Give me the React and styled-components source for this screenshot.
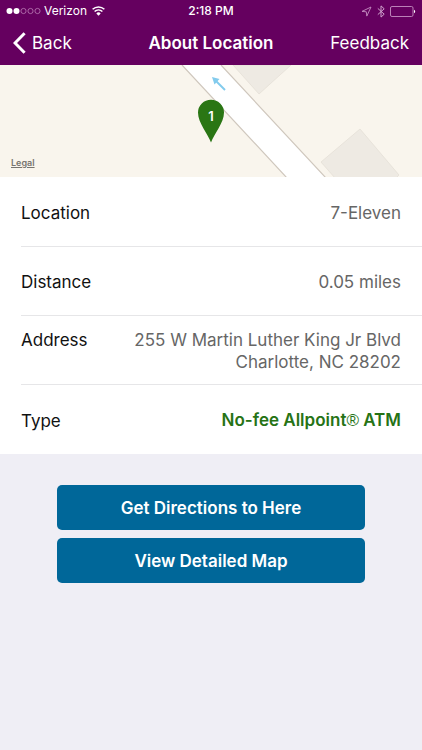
import React from "react";
import styled, { createGlobalStyle } from "styled-components";

const GlobalStyle = createGlobalStyle`
  * { box-sizing: border-box; }
  body {
    margin: 0;
    background: #efeef5;
    color: #111;
    font-family: Inter, "Liberation Sans", sans-serif;
    font-size: 17px;
    line-height: 22px;
  }
`;

const Screen = styled.div`
  min-height: 100vh;
  display: flex;
  flex-direction: column;
`;

const Header = styled.header`
  background: #65005f;
  color: #fff;
`;

const StatusBar = styled.div`
  display: grid;
  grid-template-columns: 1fr auto 1fr;
  align-items: center;
  height: 22px;
  padding: 0 6px;
  font-size: 12px;
  line-height: 16px;
`;

const StatusGroup = styled.div`
  display: flex;
  align-items: center;
  justify-content: ${(p) => (p.$end ? "flex-end" : "flex-start")};
  gap: ${(p) => (p.$end ? "5px" : "3px")};
`;

const Carrier = styled.span`
  margin-right: 2px;
`;

const Clock = styled.time`
  font-weight: 500;
`;

const NavBar = styled.nav`
  display: grid;
  grid-template-columns: 1fr auto 1fr;
  align-items: center;
  height: 43px;
  padding: 0 13px 2px;
`;

const NavButton = styled.button`
  display: flex;
  align-items: center;
  gap: 6px;
  justify-self: ${(p) => (p.$end ? "end" : "start")};
  padding: 0;
  border: 0;
  background: none;
  color: inherit;
  font: inherit;
  cursor: pointer;
`;

const Title = styled.h1`
  margin: 0;
  font-size: 17px;
  font-weight: 600;
`;

const MapPanel = styled.section`
  display: grid;
  height: 112px;
  overflow: hidden;
  background: #f9f5ed;
`;

const MapDrawing = styled.svg`
  grid-area: 1 / 1;
  width: 100%;
  height: 112px;
`;

const PinLabel = styled.text`
  font-size: 13px;
  font-weight: 600;
  fill: #fff;
  text-anchor: middle;
`;

const LegalLink = styled.a`
  grid-area: 1 / 1;
  place-self: end start;
  z-index: 1;
  margin: 0 11px 8px;
  color: #77746f;
  font-size: 9px;
  font-weight: 600;
  line-height: 12px;
`;

const Details = styled.dl`
  margin: 0;
  padding-left: 21px;
  background: #fff;
`;

const DetailRow = styled.div`
  display: flex;
  justify-content: space-between;
  align-items: ${(p) => (p.$tall ? "flex-start" : "center")};
  gap: 16px;
  min-height: 69px;
  padding: 13px 21px 11px 0;

  & + & {
    border-top: 1px solid #e6e6e8;
  }
  &:last-child {
    min-height: 70px;
  }
`;

const Term = styled.dt`
  flex-shrink: 0;
`;

const Value = styled.dd`
  margin: 0;
  text-align: right;
  color: ${(p) => (p.$highlight ? "#267315" : "#666")};
  font-weight: ${(p) => (p.$highlight ? 600 : 400)};
`;

const Line = styled.span`
  display: block;
`;

const RegisteredMark = styled.span`
  font-family: "Liberation Sans", sans-serif;
  font-weight: 400;
`;

const Actions = styled.div`
  display: flex;
  flex-direction: column;
  gap: 8px;
  padding: 31px 57px;
`;

const ActionButton = styled.button`
  height: 45px;
  border: 0;
  border-radius: 5px;
  background: #006799;
  color: #fff;
  font: inherit;
  font-weight: 600;
  cursor: pointer;
`;

const SignalDots = () => (
  <svg width="35" height="8" viewBox="0 0 35 8" aria-label="Signal strength 2 of 5">
    {[0, 1, 2, 3, 4].map((i) => (
      <circle
        key={i}
        cx={3.5 + i * 7}
        cy="4"
        r={i < 2 ? 3 : 2.6}
        fill={i < 2 ? "#fff" : "none"}
        stroke={i < 2 ? "none" : "#c58fc2"}
        strokeWidth="0.7"
      />
    ))}
  </svg>
);

const WifiIcon = () => (
  <svg width="13" height="10" viewBox="0 0 13 10" fill="none" stroke="#fff" strokeWidth="1.5" aria-label="Wi-Fi">
    <path d="M0.6 3.3a8.6 8.6 0 0 1 11.8 0M2.6 5.5a5.7 5.7 0 0 1 7.8 0" />
    <path d="M4.3 7.4a3.2 3.2 0 0 1 4.4 0L6.500 9.700z" fill="#fff" stroke="none" />
  </svg>
);

const LocationIcon = () => (
  <svg width="11" height="11" viewBox="0 0 11 11" fill="none" stroke="#c58fc2" strokeWidth="0.9" aria-label="Location services">
    <path d="M10 1L1 5.4l4.3.4.5 4.3z" />
  </svg>
);

const BluetoothIcon = () => (
  <svg width="8" height="13" viewBox="0 0 8 13" fill="none" stroke="#d0a3cd" strokeWidth="1" aria-label="Bluetooth">
    <path d="M0.800 3.400l6.400 5.800-3.200 2.900V0.900l3.200 2.900-6.400 5.800" />
  </svg>
);

const BatteryIcon = () => (
  <svg width="26" height="11" viewBox="0 0 26 11" fill="none" aria-label="Battery">
    <rect x="0.5" y="0.5" width="22.5" height="10" rx="1.5" stroke="#c58fc2" strokeWidth="0.9" />
    <path d="M24 3.8c1.6.4 1.6 3 0 3.4z" fill="#fff" />
  </svg>
);

const BackIcon = () => (
  <svg width="13" height="22" viewBox="0 0 13 22" fill="none" stroke="#fff" strokeWidth="3" aria-hidden="true">
    <path d="M11.6 1.2L2 11l9.6 9.8" />
  </svg>
);

const LocationMap = () => (
  <MapDrawing viewBox="0 0 422 112" preserveAspectRatio="xMidYMid slice" role="img" aria-label="Map of the ATM location">
    <path d="M182 0L287 113H326L221 0z" fill="#fff" />
    <path d="M182 0L287 113M221 0L326 113" stroke="#cfc7bd" strokeWidth="1.2" />
    <path d="M233 0L259 29L291 0z" fill="#eeeae3" stroke="#e4dfd7" strokeWidth="0.8" />
    <path d="M321 97L360 64L399 110L396 113H335z" fill="#eeeae3" stroke="#e4dfd7" strokeWidth="0.8" />
    <path d="M225 25L215 15" stroke="#83cbed" strokeWidth="2" />
    <path d="M212 12L219.5 14L214.5 19.5z" fill="#83cbed" />
    <path
      d="M211 77.5C208 69 198 58 198 47.5a13 12.8 0 0 1 26 0C224 58 214 69 211 77.5z"
      fill="#2a7614"
    />
    <PinLabel x="211" y="56">1</PinLabel>
  </MapDrawing>
);

const details = [
  { term: "Location", lines: ["7-Eleven"] },
  { term: "Distance", lines: ["0.05 miles"] },
  { term: "Address", lines: ["255 W Martin Luther King Jr Blvd", "Charlotte, NC 28202"] },
  {
    term: "Type",
    lines: [
      <>
        No-fee Allpoint<RegisteredMark>®</RegisteredMark> ATM
      </>,
    ],
    highlight: true,
  },
];

export default function App() {
  return (
    <Screen>
      <GlobalStyle />
      <Header>
        <StatusBar>
          <StatusGroup>
            <SignalDots />
            <Carrier>Verizon</Carrier>
            <WifiIcon />
          </StatusGroup>
          <Clock>2:18 PM</Clock>
          <StatusGroup $end>
            <LocationIcon />
            <BluetoothIcon />
            <BatteryIcon />
          </StatusGroup>
        </StatusBar>
        <NavBar>
          <NavButton type="button">
            <BackIcon />
            Back
          </NavButton>
          <Title>About Location</Title>
          <NavButton type="button" $end>
            Feedback
          </NavButton>
        </NavBar>
      </Header>
      <main>
        <MapPanel>
          <LocationMap />
          <LegalLink href="#legal">Legal</LegalLink>
        </MapPanel>
        <Details>
          {details.map(({ term, lines, highlight }) => (
            <DetailRow key={term} $tall={lines.length > 1}>
              <Term>{term}</Term>
              <Value $highlight={highlight}>
                {lines.map((line, index) => (
                  <Line key={index}>{line}</Line>
                ))}
              </Value>
            </DetailRow>
          ))}
        </Details>
        <Actions>
          <ActionButton type="button">Get Directions to Here</ActionButton>
          <ActionButton type="button">View Detailed Map</ActionButton>
        </Actions>
      </main>
    </Screen>
  );
}
